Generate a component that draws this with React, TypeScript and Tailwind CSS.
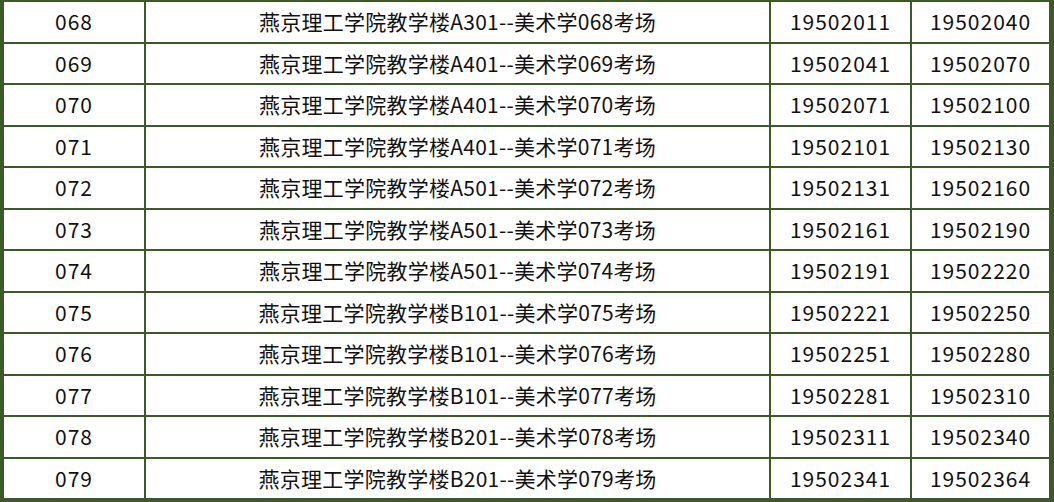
import { Fragment } from "react";

const rows = [
  ["068", "燕京理工学院教学楼A301--美术学068考场", "19502011", "19502040"],
  ["069", "燕京理工学院教学楼A401--美术学069考场", "19502041", "19502070"],
  ["070", "燕京理工学院教学楼A401--美术学070考场", "19502071", "19502100"],
  ["071", "燕京理工学院教学楼A401--美术学071考场", "19502101", "19502130"],
  ["072", "燕京理工学院教学楼A501--美术学072考场", "19502131", "19502160"],
  ["073", "燕京理工学院教学楼A501--美术学073考场", "19502161", "19502190"],
  ["074", "燕京理工学院教学楼A501--美术学074考场", "19502191", "19502220"],
  ["075", "燕京理工学院教学楼B101--美术学075考场", "19502221", "19502250"],
  ["076", "燕京理工学院教学楼B101--美术学076考场", "19502251", "19502280"],
  ["077", "燕京理工学院教学楼B101--美术学077考场", "19502281", "19502310"],
  ["078", "燕京理工学院教学楼B201--美术学078考场", "19502311", "19502340"],
  ["079", "燕京理工学院教学楼B201--美术学079考场", "19502341", "19502364"],
];

export default function App() {
  return (
    <div className="w-[1054px] h-[502px] bg-[#3b5a27] pt-[2px] pl-[4px] pr-[5px] pb-[4px] font-['Noto_Sans_CJK_SC','Noto_Sans',sans-serif] text-[21px] text-[#111]">
      <div className="grid h-full grid-cols-[140px_623px_139px_1fr] grid-rows-12 gap-[2px]">
        {rows.map((r, i) => (
          <Fragment key={i}>
            <div className="bg-white flex items-center justify-center leading-none tracking-[1px]">
              {r[0]}
            </div>
            <div className="bg-white flex items-center justify-center leading-none tracking-[0.25px]">
              {r[1]}
            </div>
            <div className="bg-white flex items-center justify-center leading-none tracking-[1px]">
              {r[2]}
            </div>
            <div className="bg-white flex items-center justify-center leading-none tracking-[1px]">
              {r[3]}
            </div>
          </Fragment>
        ))}
      </div>
    </div>
  );
}
